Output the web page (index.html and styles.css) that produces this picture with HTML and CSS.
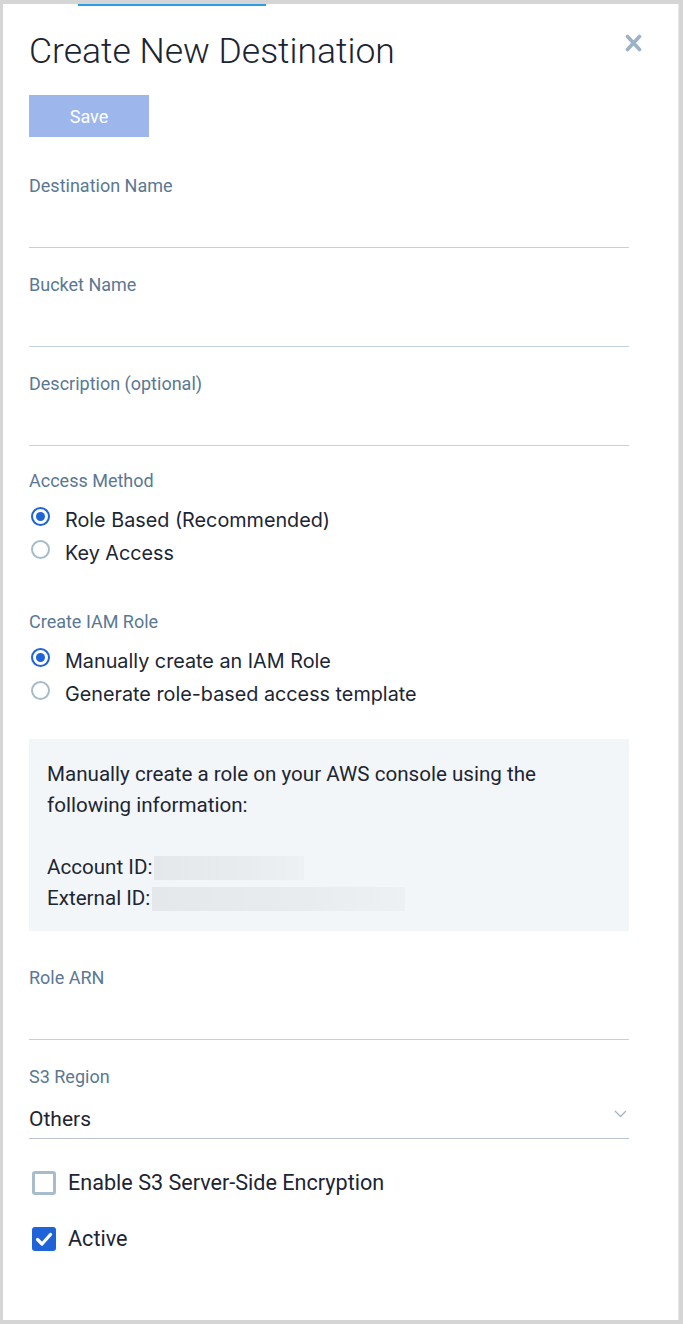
FILE: index.html
```html
<!DOCTYPE html>
<html lang="en">
<head>
<meta charset="utf-8">
<title>Create New Destination</title>
<link rel="stylesheet" href="styles.css">
</head>
<body>
<div class="panel">
  <button class="close" aria-label="Close">
    <svg width="17" height="18" viewBox="0 0 17 18"><path d="M2.5 2.5 L14.5 15.5 M14.5 2.5 L2.5 15.5" stroke="#9cb2c6" stroke-width="3.6" stroke-linecap="round"/></svg>
  </button>
  <h1 class="title">Create New Destination</h1>
  <button class="save">Save</button>

  <div class="field">
    <div class="label">Destination Name</div>
    <div class="input"></div>
  </div>
  <div class="field">
    <div class="label">Bucket Name</div>
    <div class="input"></div>
  </div>
  <div class="field">
    <div class="label">Description (optional)</div>
    <div class="input"></div>
  </div>

  <div class="group">
    <div class="label">Access Method</div>
    <div class="radios">
      <div class="radio-row"><span class="radio checked"></span><span class="radio-text">Role Based (Recommended)</span></div>
      <div class="radio-row"><span class="radio"></span><span class="radio-text">Key Access</span></div>
    </div>
  </div>

  <div class="group group-last">
    <div class="label">Create IAM Role</div>
    <div class="radios">
      <div class="radio-row"><span class="radio checked"></span><span class="radio-text">Manually create an IAM Role</span></div>
      <div class="radio-row"><span class="radio"></span><span class="radio-text">Generate role-based access template</span></div>
    </div>
  </div>

  <div class="info">
    <div class="info-line">Manually create a role on your AWS console using the</div>
    <div class="info-line">following information:</div>
    <div class="info-line">&nbsp;</div>
    <div class="info-line">Account ID:<span class="redact redact-account"></span></div>
    <div class="info-line">External ID:<span class="redact redact-external"></span></div>
  </div>

  <div class="field">
    <div class="label">Role ARN</div>
    <div class="input"></div>
  </div>

  <div class="field-select">
    <div class="label">S3 Region</div>
    <div class="select">
      <span class="select-value">Others</span>
      <svg class="chevron" width="13" height="8" viewBox="0 0 13 8"><polyline points="1,1 6.5,6.5 12,1" fill="none" stroke="#a3b5c5" stroke-width="1.3"/></svg>
    </div>
  </div>

  <div class="check-row">
    <span class="checkbox"></span>
    <span class="check-text">Enable S3 Server-Side Encryption</span>
  </div>
  <div class="check-row">
    <span class="checkbox checked">
      <svg width="24" height="24" viewBox="0 0 24 24"><polyline points="5.5,12.5 10,17 18.5,7.5" fill="none" stroke="#ffffff" stroke-width="3.2" stroke-linecap="round" stroke-linejoin="round"/></svg>
    </span>
    <span class="check-text">Active</span>
  </div>
</div>
</body>
</html>
```
FILE: styles.css
```css
html, body {
  margin: 0;
  height: 1324px;
  overflow: hidden;
}
body {
  background: #d5d5d5;
  padding: 4px 4px 4px 3px;
  box-sizing: border-box;
  font-family: Roboto, "Liberation Sans", sans-serif;
  color: #1c2534;
}
.panel {
  position: relative;
  background: #ffffff;
  height: 1316px;
  box-sizing: border-box;
  border-right: 1px solid #e8e8e8;
  padding: 26px 49px 0 26px;
}
.panel::before {
  content: "";
  position: absolute;
  top: 0;
  left: 75px;
  width: 188px;
  height: 2px;
  background: #2c9ee3;
}
.close {
  position: absolute;
  top: 30px;
  right: 36px;
  border: 0;
  padding: 0;
  background: none;
  width: 17px;
  height: 18px;
  display: block;
}
.close svg { display: block; }
.title {
  margin: 0;
  font-family: Roboto, sans-serif;
  font-weight: 300;
  font-size: 35.5px;
  line-height: 42px;
  color: #1b2433;
}
.save {
  display: block;
  margin-top: 23px;
  width: 120px;
  height: 42px;
  border: 0;
  background: #9db7ec;
  color: #ffffff;
  font-family: Roboto, sans-serif;
  font-size: 18px;
  padding: 0;
}
.save + .field { margin-top: 38px; }
.field, .field-select {
  margin-bottom: 26px;
}
.label {
  font-family: Roboto, sans-serif;
  font-size: 18px;
  line-height: 22px;
  color: #5a7893;
}
.input {
  height: 50px;
  border-bottom: 1px solid #c4d2dd;
}
.group {
  margin-top: -2px;
  margin-bottom: 41px;
}
.group-last {
  margin-top: 0;
  margin-bottom: 28px;
}
.radios {
  margin-top: 12px;
}
.radio-row {
  display: flex;
  align-items: flex-start;
  height: 33px;
  line-height: 33px;
}
.radio {
  box-sizing: border-box;
  width: 19px;
  height: 19px;
  margin: 3px 15px 0 2px;
  border: 2px solid #a8bbcb;
  border-radius: 50%;
  background: #fff;
  display: flex;
  align-items: center;
  justify-content: center;
  flex: none;
}
.radio.checked {
  border-color: #1f63d8;
}
.radio.checked::after {
  content: "";
  width: 9px;
  height: 9px;
  border-radius: 50%;
  background: #1f63d8;
}
.radio-text {
  font-family: Inter, sans-serif;
  font-size: 19.8px;
  color: #1c2534;
}
.info {
  background: #f3f6f9;
  padding: 20px 18px 17px 18px;
  margin-bottom: 36px;
}
.info-line {
  font-family: Roboto, sans-serif;
  font-size: 20.6px;
  line-height: 31px;
  color: #1c2534;
  display: flex;
  align-items: center;
}
.redact {
  display: inline-block;
  height: 24px;
  margin-left: 2px;
  background: linear-gradient(90deg, #e5e8eb 0%, #e9ecee 60%, #eef1f3 100%);
}
.redact-account { width: 150px; }
.redact-external { width: 253px; }
.select {
  display: flex;
  align-items: flex-start;
  padding-top: 18px;
  height: 32px;
  border-bottom: 1px solid #b9c6d1;
}
.select-value {
  font-family: Roboto, sans-serif;
  font-size: 21px;
  line-height: 26px;
  color: #1c2534;
}
.chevron {
  margin-left: auto;
  margin-top: 4px;
  margin-right: 2px;
}
.field-select {
  margin-bottom: 32px;
}
.check-row {
  display: flex;
  align-items: center;
  height: 24px;
  margin-bottom: 32px;
}
.checkbox {
  box-sizing: border-box;
  width: 24px;
  height: 24px;
  margin: 0 12px 0 3px;
  border: 3px solid #a8bccb;
  border-radius: 3px;
  flex: none;
  background: #fff;
}
.checkbox.checked {
  border: 0;
  background: #1f63d8;
}
.checkbox svg { display: block; }
.check-text {
  font-family: Roboto, sans-serif;
  font-size: 21.6px;
  line-height: 24px;
  color: #1c2534;
}
```
